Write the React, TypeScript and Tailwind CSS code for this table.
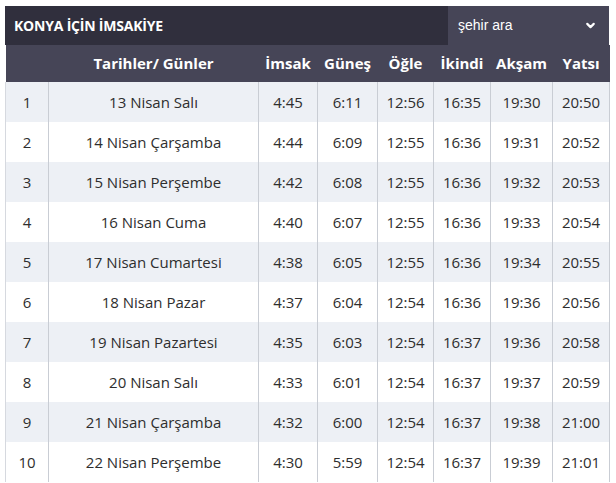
import { ChevronDown } from 'lucide-react'

const rows: [string, string, string, string, string, string, string][] = [
  ['13 Nisan Salı', '4:45', '6:11', '12:56', '16:35', '19:30', '20:50'],
  ['14 Nisan Çarşamba', '4:44', '6:09', '12:55', '16:36', '19:31', '20:52'],
  ['15 Nisan Perşembe', '4:42', '6:08', '12:55', '16:36', '19:32', '20:53'],
  ['16 Nisan Cuma', '4:40', '6:07', '12:55', '16:36', '19:33', '20:54'],
  ['17 Nisan Cumartesi', '4:38', '6:05', '12:55', '16:36', '19:34', '20:55'],
  ['18 Nisan Pazar', '4:37', '6:04', '12:54', '16:36', '19:36', '20:56'],
  ['19 Nisan Pazartesi', '4:35', '6:03', '12:54', '16:37', '19:36', '20:58'],
  ['20 Nisan Salı', '4:33', '6:01', '12:54', '16:37', '19:37', '20:59'],
  ['21 Nisan Çarşamba', '4:32', '6:00', '12:54', '16:37', '19:38', '21:00'],
  ['22 Nisan Perşembe', '4:30', '5:59', '12:54', '16:37', '19:39', '21:01'],
]

const vakitler = ['İmsak', 'Güneş', 'Öğle', 'İkindi', 'Akşam', 'Yatsı']
const widths = ['w-[59px]', 'w-[60px]', 'w-[56px]', 'w-[57px]', 'w-[62px]', 'w-[57px]']

export default function App() {
  return (
    <div className="bg-white pt-[6px] pl-[5px] w-[616px] h-[483px] overflow-hidden font-['Open_Sans',sans-serif]">
      <div className="w-[604px]">
        {/* Başlık */}
        <div className="flex h-[39px] bg-[#302f3d]">
          <div className="flex-1 flex items-center pl-[9px] text-[14px] font-bold text-white tracking-[-0.2px]">
            KONYA İÇİN İMSAKİYE
          </div>
          <div className="w-[161px] bg-[#464557] flex items-center justify-between pl-[10px] pr-[12px] text-white text-[14px] font-['Liberation_Sans',sans-serif]">
            <span>şehir ara</span>
            <ChevronDown className="w-[13px] h-[13px]" strokeWidth={4} />
          </div>
        </div>

        <table className="w-[604px] border-collapse table-fixed text-[15px]">
          <thead>
            <tr className="h-[37px] bg-[#464557] text-white">
              <th className="w-[43px]"></th>
              <th className="w-[210px] font-bold">Tarihler/ Günler</th>
              {vakitler.map((v, i) => (
                <th key={v} className={`${widths[i]} font-bold`}>{v}</th>
              ))}
            </tr>
          </thead>
          <tbody className="text-[#2e2e2e] font-medium">
            {rows.map((r, i) => (
              <tr key={i} className={`h-[40px] ${i % 2 === 0 ? 'bg-[#edf0f5]' : 'bg-white'}`}>
                <td className="text-center border-l border-[#d6d9df]">{i + 1}</td>
                {r.map((c, j) => (
                  <td key={j} className="text-center border-l border-r border-[#c9cdd4]">{c}</td>
                ))}
              </tr>
            ))}
          </tbody>
        </table>
      </div>
    </div>
  )
}
